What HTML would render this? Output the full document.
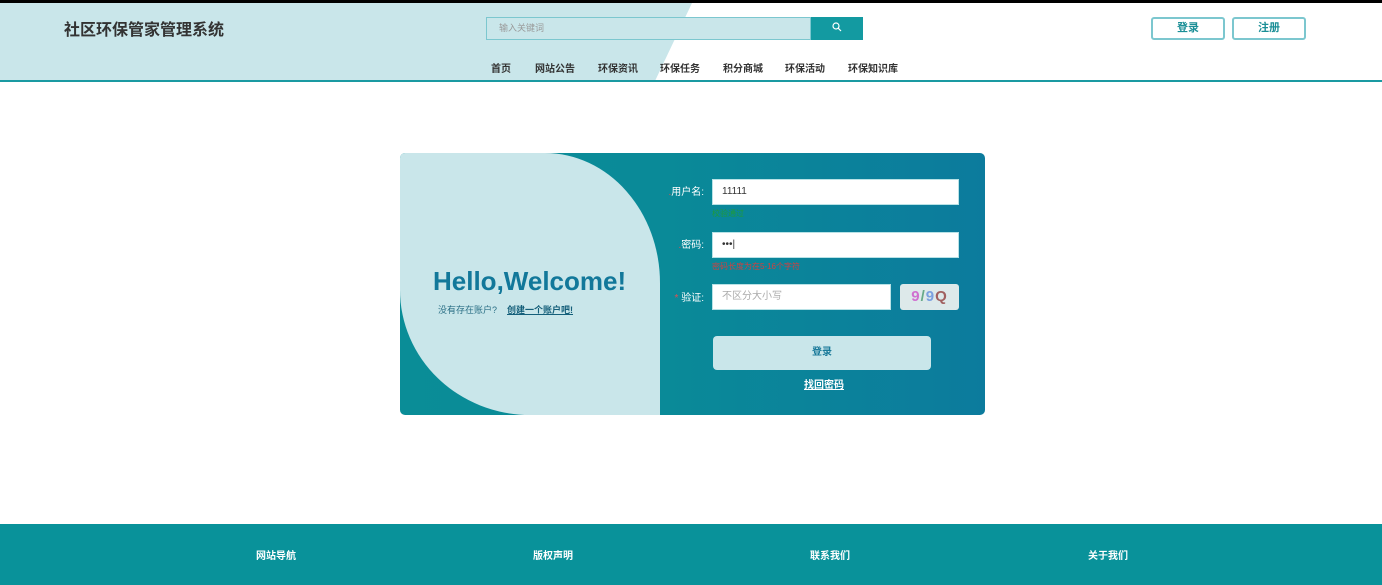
<!DOCTYPE html>
<html><head><meta charset="utf-8"><style>
*{margin:0;padding:0;box-sizing:border-box}
body{width:1382px;height:585px;position:relative;background:#fff;font-family:"Liberation Sans","Noto Sans CJK SC",sans-serif;overflow:hidden}
.abs{position:absolute}
.nav a{position:absolute;top:60px;font-size:10px;color:#333;font-weight:bold;text-decoration:none}
.btn{position:absolute;top:17px;width:74px;height:23px;border:2px solid #7cc7cf;border-radius:3px;color:#1a8e96;font-size:11px;font-weight:bold;text-align:center;line-height:19px;background:#fff}
.lbl{position:absolute;font-size:10px;color:#fff;text-align:right;width:50px}
.lbl b{color:#e05050;font-weight:normal}
.inp{position:absolute;background:#fff;border:1px solid #b8e2e6;font-size:10px;padding-left:9px;line-height:24px;color:#333}
.f{position:absolute;top:547px;font-size:10px;color:#fff;font-weight:bold}
</style></head><body>
<div class="abs" style="left:0;top:0;width:1382px;height:3px;background:#000"></div>
<svg class="abs" style="left:0;top:3px" width="1382" height="78"><polygon points="0,0 692,0 655,78 0,78" fill="#c9e6ea"/></svg>
<div class="abs" style="left:0;top:80px;width:1382px;height:2px;background:#1a9aa2"></div>
<div class="abs" style="left:64px;top:16px;font-size:16px;font-weight:bold;color:#333">社区环保管家管理系统</div>
<div class="abs" style="left:486px;top:17px;width:325px;height:23px;border:1px solid #7cc7cf;background:#c9e6ea;font-size:9px;color:#999;padding-left:12px;line-height:21px">输入关键词</div>
<div class="abs" style="left:811px;top:17px;width:52px;height:23px;background:#139aa1;color:#fff;text-align:center;line-height:22px;font-size:10px">
<svg width="10" height="10" viewBox="0 0 10 10" style="vertical-align:middle"><circle cx="4" cy="4" r="3" fill="none" stroke="#fff" stroke-width="1.2"/><line x1="6.2" y1="6.2" x2="9" y2="9" stroke="#fff" stroke-width="1.2"/></svg></div>
<div class="nav"><a style="left:491px">首页</a><a style="left:535px">网站公告</a><a style="left:598px">环保资讯</a><a style="left:660px">环保任务</a><a style="left:723px">积分商城</a><a style="left:785px">环保活动</a><a style="left:848px">环保知识库</a></div>
<div class="btn" style="left:1151px">登录</div><div class="btn" style="left:1232px">注册</div>

<div class="abs" style="left:400px;top:153px;width:585px;height:262px;border-radius:5px;background:linear-gradient(90deg,#0a8d97 0%,#0a8a98 45%,#0c7b9d 100%);overflow:hidden">
<div class="abs" style="left:0;top:0;width:260px;height:262px;background:#c9e6ea;border-radius:0 115px 0 130px / 0 130px 0 125px"></div>
<div class="abs" style="left:33px;top:113px;font-size:26px;font-weight:bold;color:#12789a">Hello,Welcome!</div>
<div class="abs" style="left:38px;top:150px;font-size:9px;color:#2a6f85">没有存在账户? &nbsp;&nbsp;&nbsp;<u style="font-weight:bold;color:#145f7a">创建一个账户吧!</u></div>
</div>
<div class="lbl" style="left:654px;top:183px"><b>.</b>用户名:</div>
<div class="inp" style="left:712px;top:179px;width:247px;height:26px">11111</div>
<div class="abs" style="left:712px;top:208px;font-size:8px;color:#1f9a3a">校验通过</div>
<div class="lbl" style="left:654px;top:236px"><b>.</b>密码:</div>
<div class="inp" style="left:712px;top:232px;width:247px;height:26px">•••|</div>
<div class="abs" style="left:712px;top:261px;font-size:8px;color:#d04040">密码长度为在5-16个字符</div>
<div class="lbl" style="left:654px;top:289px"><b>*</b> 验证:</div>
<div class="inp" style="left:712px;top:284px;width:179px;height:26px;color:#aaa">不区分大小写</div>
<div class="abs" style="left:900px;top:284px;width:59px;height:26px;background:#dde9ea;border-radius:3px;font-size:15px;font-weight:bold;line-height:26px;text-align:center;color:#d070d0;letter-spacing:1px">9<span style="color:#6a8">/</span><span style="color:#7aa0e0">9</span><span style="color:#a06060">Q</span></div>
<div class="abs" style="left:713px;top:336px;width:218px;height:34px;border-radius:4px;background:#c9e6ea;color:#1a7a9a;font-size:10px;font-weight:bold;text-align:center;line-height:34px">登录</div>
<div class="abs" style="left:804px;top:376px;font-size:10px;color:#fff;font-weight:bold;text-decoration:underline">找回密码</div>

<div class="abs" style="left:0;top:524px;width:1382px;height:61px;background:#09929a"></div>
<div class="f" style="left:256px">网站导航</div><div class="f" style="left:533px">版权声明</div><div class="f" style="left:810px">联系我们</div><div class="f" style="left:1088px">关于我们</div>
</body></html>
